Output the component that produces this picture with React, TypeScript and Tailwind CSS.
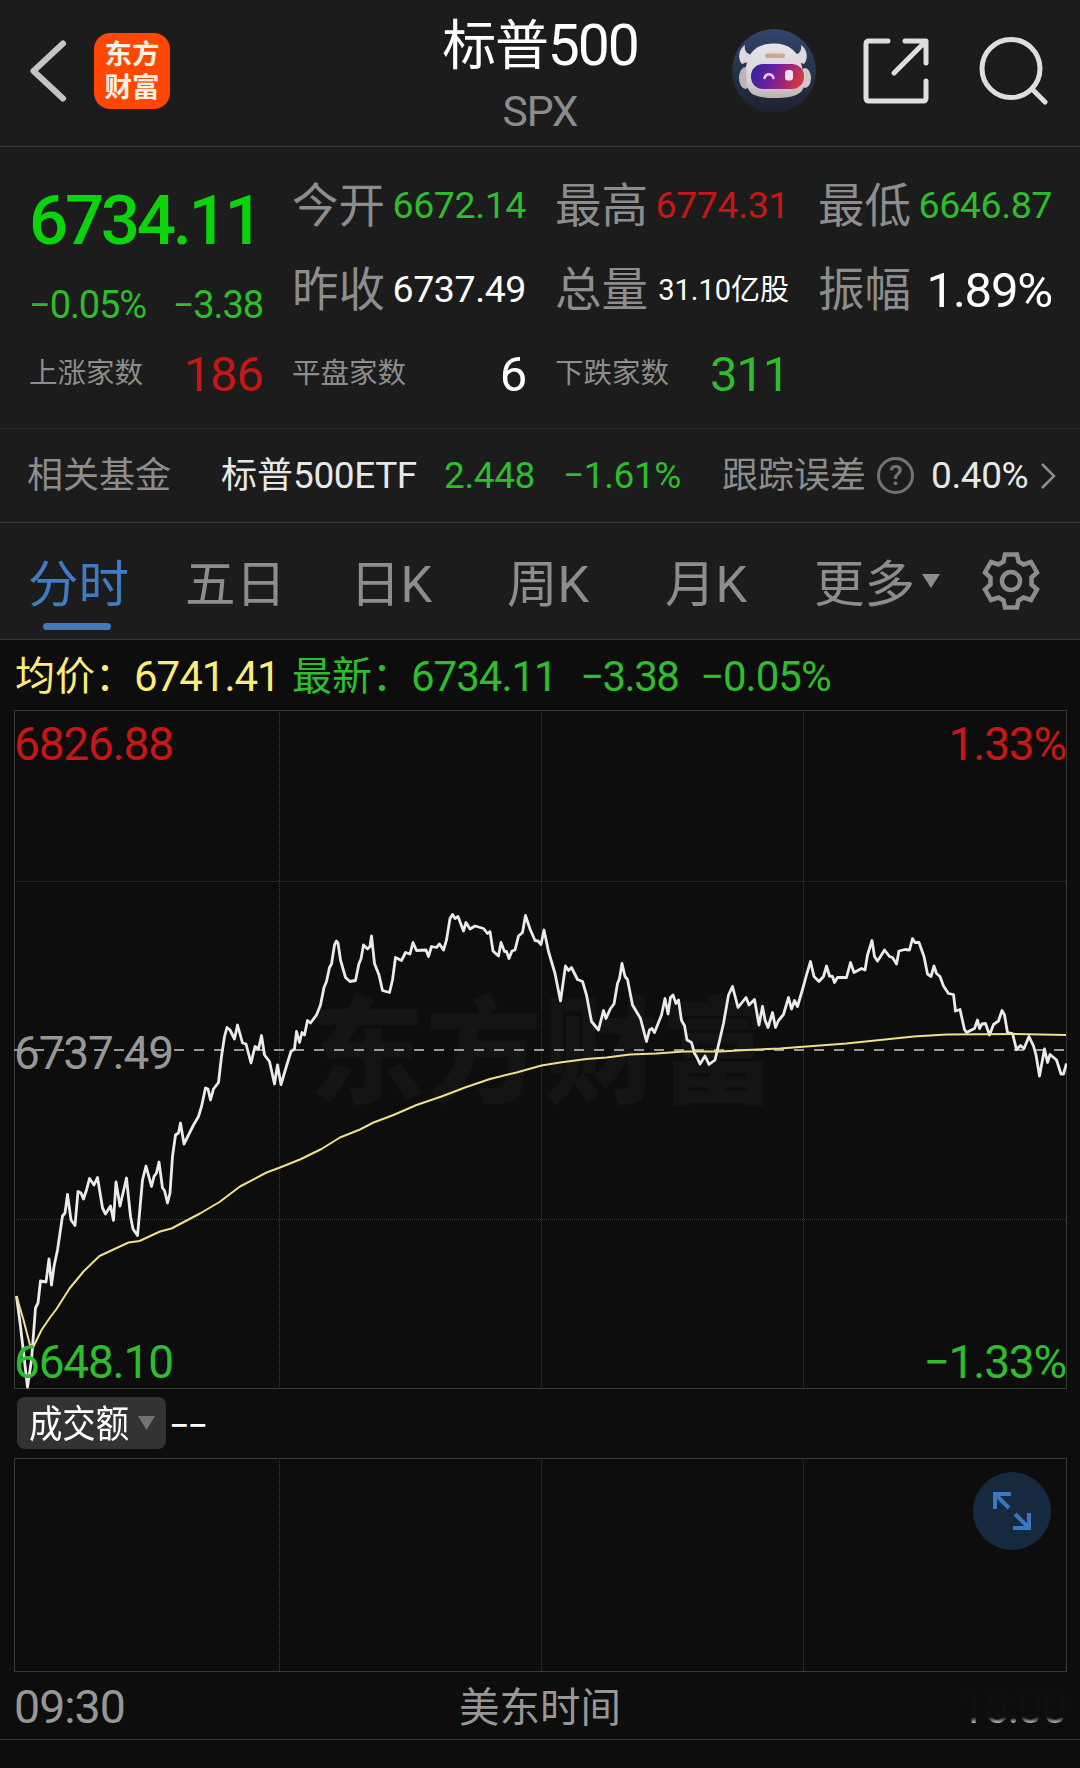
import React, { useState } from "react";

const GREEN = "text-[#2dbd2d]";
const RED = "text-[#c81616]";

const TABS = [
  { label: "分时", width: "w-[157px]" },
  { label: "五日", width: "w-[165px]" },
  { label: "日K", width: "w-[157px]" },
  { label: "周K", width: "w-[158px]" },
  { label: "月K", width: "w-[149px]" },
];

const QUOTES = [
  { label: "今开", value: "6672.14", style: "text-[37.5px] tracking-[-0.4px] text-[#2dbd2d]" },
  { label: "最高", value: "6774.31", style: "text-[37.5px] tracking-[-0.4px] text-[#c81616]" },
  { label: "最低", value: "6646.87", style: "text-[37.5px] tracking-[-0.4px] text-[#2dbd2d]" },
  { label: "昨收", value: "6737.49", style: "text-[37.5px] tracking-[-0.4px] text-white" },
  { label: "总量", value: "31.10亿股", style: "text-[29px] text-white" },
  { label: "振幅", value: "1.89%", style: "text-[49px] tracking-[-1.200px] text-white" },
];

const BREADTH = [
  { label: "上涨家数", value: "186", color: RED },
  { label: "平盘家数", value: "6", color: "text-white" },
  { label: "下跌家数", value: "311", color: GREEN },
];

const PRICE_LINE =
  "16.5,1296 20.5,1326.5 27.5,1387 31.5,1360 35.5,1308 38,1303 40.5,1281 46,1282 49,1259 51.5,1285 54,1266.5 57.5,1250 60,1233 62.5,1216 65,1213 67.5,1194.5 71,1220 75,1225.5 78,1191.5 81,1193 83.5,1199 86.5,1190 89.5,1178.5 94,1185 97.5,1177.5 102.5,1208 105.5,1214 110.5,1206 113.5,1220.5 116,1182 120,1206 126.5,1178 130.5,1216.5 133,1229 137.5,1235.5 142.5,1180 146,1166 151.5,1186.5 154,1176.5 156.5,1173 159,1162 162.5,1188 164.5,1190.5 167.5,1203 170,1193 172.5,1156.5 175.5,1135 178.5,1133 180.5,1123 184,1144 193.5,1125 198.5,1116.5 201.5,1106.5 205.5,1088 208,1089 210.5,1100 213.5,1089 218.5,1082.5 221.5,1056.5 224.5,1036.5 227,1027.5 230,1030 234.5,1039 237.5,1025 242.5,1043 246,1044 251,1063 255,1046.5 258.5,1049 261.5,1035.5 264.5,1055 269.5,1061.5 274.5,1084 277.5,1065 281,1084.5 286.5,1066 291,1051.5 294.5,1049 296.5,1031.5 299.5,1042.5 302,1032.5 304.5,1035 307.5,1020.5 310.5,1023 316.5,1015 320.5,1005 324,987.5 326.5,981.5 329.5,967.5 331.5,964 334.5,945 336.5,941 338,943 340.5,960 345.5,977.5 350,981.5 355.5,980.5 359,963.5 361,959 363.5,945 367.5,949 370,946.5 371.5,936 374.5,963.5 379,975 382.5,990.5 389.5,992.5 392.5,980 395.5,957.5 401.5,960.5 405.5,952.5 410,954 413,942.5 416.5,950.5 426,950 428.5,956.5 431.5,946.5 436.5,947.5 439.5,944 443.5,950 446.5,940 450,918.5 452.5,914.5 455,918.5 458,916.5 463.5,931 466,922.5 470,929 475,926 483.5,928.5 487.5,933.5 490,931.5 493,951 498.5,956 501,942.5 504.5,951.5 506.5,951.5 509,958.5 512,951 515,950 518.5,936 522.5,932.5 525.5,915.5 530,929 535,940.5 538,941 541,944.5 544,930 548.5,951.5 555,973.5 560.5,1001 563.5,980 565.5,966 568.5,970.5 571.5,967.5 577.5,979.5 582.5,981.5 586.5,995 591.5,1021.5 598.5,1030 603.5,1010.5 606,1018.5 610.5,1008.5 614,1004 617.5,983.5 619.5,978.5 622,963.5 625,976.5 627.5,979.5 632.5,1005 640.5,1018.5 646.5,1041.5 649.5,1030 652,1028.5 654.5,1032.5 661.5,1015 665,998.5 668,1014 670.5,997.5 673,995 676,1003.5 678.5,1000 681.5,1020.5 684.5,1025.5 687,1040 691.5,1042.5 694.5,1053.5 696.5,1056.5 700,1064 705,1056 709,1064.5 715,1060 718.5,1045 723.5,1023.5 728.5,995 732.5,986.5 738,1007.5 746,997.5 749,1005 754.5,999.5 759,1025 762.5,1006.5 765,1020 768,1027.5 772.5,1012.5 775.5,1027.5 778.5,1020.5 783.5,1014.5 788.5,997.5 791.5,1009 794.5,1000.5 797.5,1006.5 803.5,986 806.5,975 810.5,961.5 814,976.5 819,981.5 823.5,976.5 826.5,966 829.5,976 832.5,976.5 834.5,982.5 837.5,977.5 846.5,977.5 850.5,962.5 854,972.5 861.5,968.5 865,970 867.5,955 872,940.5 874.5,956.5 877.5,961 880.5,956.5 884.5,950 889.5,956.5 892.5,957.5 896.5,964 899,951 905,949.5 909.5,950 912.5,938.5 915,942.5 919,942.5 924,956.5 927.5,974 931,976.5 934,966 936.5,973.5 940,976.5 943.5,986 948.5,993.5 953.5,994.5 955.5,1011 960,1009.5 964.5,1029.5 966.5,1032.5 974.5,1028.5 977.5,1020 979.5,1028.5 982,1024 985.5,1023.5 989.5,1035 993.5,1024.5 998.5,1021 1002,1010.5 1004.5,1015 1007.5,1032.5 1012.5,1033.5 1016.5,1049.5 1020.5,1045.5 1024,1048.5 1029,1036.5 1033.5,1046 1036,1055 1039.5,1076 1044.5,1049 1047.5,1062.5 1050,1054.5 1056.5,1060 1061,1074 1063.5,1074 1066.5,1063.5";

const AVG_LINE =
  "16.5,1296 23.5,1320 30,1345 33.5,1346.5 41.5,1330 50,1317.5 56.5,1309 69.5,1288.5 83.5,1271.5 99.5,1256 128.5,1242.5 139.5,1241 160,1231.5 171.5,1228.5 200,1213.5 219.5,1202 240,1186.5 266.5,1172.5 280,1167.5 300,1159.5 321.5,1149 340,1137.5 360,1129.5 373.5,1122.5 393.5,1115 416.5,1105 441.5,1096.5 465,1087.5 490,1079 516.5,1072.5 541.5,1065.5 560,1062.5 586.5,1059 606.5,1057.5 630,1054.5 656.5,1053.5 683.5,1051.5 720,1051.5 746.5,1050 780,1048.5 806.5,1046.5 846.5,1043.5 880,1040 913.5,1036.5 946.5,1034.5 1013.5,1034 1066,1035";

const RobotAvatar = () => (
  <svg className="h-[84px] w-[84px]" viewBox="0 0 84 84">
    <defs>
      <linearGradient id="sky" x1="0" y1="0" x2="0" y2="1">
        <stop offset="0" stopColor="#33456b" />
        <stop offset="0.6" stopColor="#252f45" />
        <stop offset="1" stopColor="#1d222d" />
      </linearGradient>
      <linearGradient id="visor" x1="0" y1="0" x2="1" y2="0.2">
        <stop offset="0" stopColor="#2a2596" />
        <stop offset="0.45" stopColor="#6a1fa0" />
        <stop offset="0.8" stopColor="#a92a6c" />
        <stop offset="1" stopColor="#d0384a" />
      </linearGradient>
      <linearGradient id="helmet" x1="0" y1="0" x2="0" y2="1">
        <stop offset="0" stopColor="#e6e4e8" />
        <stop offset="0.7" stopColor="#d6d1d4" />
        <stop offset="1" stopColor="#b9b0b4" />
      </linearGradient>
    </defs>
    <circle cx="42" cy="42" r="42" fill="url(#sky)" />
    {/* horns */}
    <path d="M13 16C7 20 5 29 10 35L18 32L20 26C15 25 12 22 13 16Z" fill="#dcdade" />
    <path d="M69 16C75 20 77 29 72 35L64 32L62 26C67 25 70 22 69 16Z" fill="#dcdade" />
    {/* ears */}
    <ellipse cx="13.500" cy="49" rx="6.500" ry="11" fill="#bdb5b5" />
    <ellipse cx="73" cy="49" rx="6" ry="10" fill="#cfc9cc" />
    <path d="M14 38C16 22 26 15 41 14.500C56 14 67 22 70 38L72 55C72 65 62 69 43 69C23 69 16 65 15 55Z" fill="url(#helmet)" />
    <rect x="33" y="24.500" width="20" height="4.500" rx="2" fill="#c9a995" />
    <rect x="19" y="35" width="53" height="25" rx="12" fill="url(#visor)" />
    <path d="M32.500 49C34 44 40 44 41.500 49" fill="none" stroke="#e4cdf5" strokeWidth="2.500" strokeLinecap="round" />
    <rect x="53" y="41" width="8" height="10.500" rx="3" fill="#f3e3f0" />
  </svg>
);

const Header = () => (
  <header className="grid h-[147px] grid-cols-[1fr_200px_1fr] border-b border-[#363636]">
    <div className="flex items-center gap-6 pb-1 pl-[28px]">
      <svg className="h-[64px] w-[42px]" viewBox="0 0 42 64" fill="none" stroke="#c4c4c4" strokeWidth="6" strokeLinecap="round" strokeLinejoin="round">
        <path d="M35 4.500L5.500 32L35 59.500" />
      </svg>
      <div className="flex h-[76px] w-[76px] flex-col items-center justify-center rounded-[16px] bg-[#fd4704] text-[27.5px] leading-[33px] font-bold text-[#fff3e6]">
        <span>东方</span>
        <span>财富</span>
      </div>
    </div>
    <div className="flex flex-col items-center whitespace-nowrap">
      <h1 className="mt-[8px] text-[54px] leading-[76px] tracking-[-1.300px] text-white">
        标普<span className="text-[57px] tracking-[-2px]">500</span>
      </h1>
      <p className="text-[42.5px] leading-[54px] tracking-[-1px] text-[#8c8c8c]">SPX</p>
    </div>
    <div className="flex items-center justify-end pr-[32px] pb-1">
      <RobotAvatar />
      <svg className="ml-[46px] h-[68px] w-[68px]" viewBox="0 0 68 68" fill="none" stroke="#dedede" strokeWidth="5" strokeLinecap="round" strokeLinejoin="round">
        <path d="M26 4H7Q4 4 4 7V61Q4 64 7 64H61Q64 64 64 61V44" />
        <path d="M43 4H64V26M63 5L32 36" />
      </svg>
      <svg className="ml-[49px] h-[70px] w-[69px]" viewBox="0 0 69 70" fill="none" stroke="#dedede" strokeWidth="5" strokeLinecap="round">
        <circle cx="32" cy="32.500" r="29" />
        <path d="M53 53L66 66" />
      </svg>
    </div>
  </header>
);

const QuotePanel = () => (
  <section className="grid h-[282px] auto-rows-[84px] grid-cols-[repeat(4,234px)] gap-x-[29px] border-b border-[#262626] pt-[17px] pl-[29px]">
    <div className="row-span-2 flex flex-col whitespace-nowrap">
      <div className="flex h-[114px] items-center pb-[2px] text-[69px] leading-none font-medium tracking-[-3.300px] text-[#0cd40c]">6734.11</div>
      <div className={`flex h-[54px] items-center justify-between text-[38px] leading-none tracking-[-1.100px] ${GREEN}`}>
        <span>−0.05%</span>
        <span>−3.38</span>
      </div>
    </div>
    {QUOTES.map((q) => (
      <div key={q.label} className="flex items-center justify-between leading-none whitespace-nowrap">
        <span className="text-[46.5px] text-[#8d8d8d]">{q.label}</span>
        <span className={q.style}>{q.value}</span>
      </div>
    ))}
    {BREADTH.map((b) => (
      <div key={b.label} className="flex items-center justify-between leading-none whitespace-nowrap">
        <span className="text-[28.5px] text-[#8d8d8d]">{b.label}</span>
        <span className={`text-[49px] tracking-[-1.200px] ${b.color}`}>{b.value}</span>
      </div>
    ))}
  </section>
);

const FundRow = () => (
  <section className="flex h-[94px] items-center border-b border-[#363636] pl-[27px] text-[37px] leading-none tracking-[-0.4px] whitespace-nowrap">
    <span className="w-[194px] pt-px text-[36px] tracking-normal text-[#8d8d8d]">相关基金</span>
    <span className="w-[223px] text-[#e8e8e8]">
      <span className="text-[36px] tracking-normal">标普</span>500ETF
    </span>
    <span className={`w-[119px] ${GREEN}`}>2.448</span>
    <span className={`w-[159px] ${GREEN}`}>−1.61%</span>
    <span className="w-[155px] pt-px text-[36px] tracking-normal text-[#8d8d8d]">跟踪误差</span>
    <span className="flex h-[37px] w-[37px] items-center justify-center rounded-full border-[3px] border-[#737373] text-[28px] font-medium text-[#737373]">?</span>
    <span className="ml-[17px] w-[109px] text-[#e8e8e8]">0.40%</span>
    <svg className="h-[28px] w-[16px]" viewBox="0 0 16 28" fill="none" stroke="#8d8d8d" strokeWidth="2.500">
      <path d="M2 2L14 14L2 26" />
    </svg>
  </section>
);

const Tabs = () => {
  const [active, setActive] = useState("分时");
  return (
    <nav className="flex h-[117px] items-center border-b border-[#363636] pl-[28px] text-[50.5px] leading-none whitespace-nowrap text-[#8d8d8d]">
      {TABS.map((tab) => (
        <div key={tab.label} className={tab.width}>
          <button
            onClick={() => setActive(tab.label)}
            className={`relative pt-[8px] leading-[60px] ${active === tab.label ? "text-[#3f7cc4]" : ""}`}
          >
            {tab.label}
            {active === tab.label && (
              <span className="absolute -bottom-[15px] left-[49px] h-[7px] w-[68px] -translate-x-1/2 rounded-full bg-[#4079bd]" />
            )}
          </button>
        </div>
      ))}
      <button className="flex items-center gap-[7px]">
        <span className="pt-[8px]">更多</span>
        <svg className="h-[14px] w-[18px]" viewBox="0 0 18 14" fill="#8d8d8d">
          <path d="M0 0H18L9 14Z" />
        </svg>
      </button>
      <svg className="ml-[41px] h-[60px] w-[60px]" viewBox="-30 -30 60 60" fill="none" stroke="#8d8d8d" strokeWidth="4.500">
        <path d="M-6-26.500H6L7.500-19.500L12.500-16.500L20-19L26-8.500L20.500-3.500V3.500L26 8.500L20 19L12.500 16.500L7.500 19.500L6 26.500H-6L-7.500 19.500L-12.500 16.500L-20 19L-26 8.500L-20.500 3.500V-3.500L-26-8.500L-20-19L-12.500-16.500L-7.500-19.500Z" />
        <circle r="9" />
      </svg>
    </nav>
  );
};

const Legend = () => (
  <div className={`flex h-[70px] items-center pt-[3px] pl-[15px] text-[42px] leading-none tracking-[-1px] whitespace-nowrap ${GREEN}`}>
    <span className="w-[119px] text-[40px] tracking-normal text-[#fcec7c]">均价：</span>
    <span className="w-[158px] text-[#fcec7c]">6741.41</span>
    <span className="w-[119px] text-[40px] tracking-normal">最新：</span>
    <span className="w-[169px]">6734.11</span>
    <span className="w-[120px] tracking-[-1.500px]">−3.38</span>
    <span>−0.05%</span>
  </div>
);

const PriceChart = () => (
  <div className="relative mx-[14px] h-[679px] text-[46px] leading-none tracking-[-1.200px]">
    <span className="absolute top-[286px] left-[295px] text-[116px] font-black tracking-[1px] whitespace-nowrap text-[#141414]">东方财富</span>
    <svg className="absolute top-0 left-0 h-[679px] w-[1053px]" viewBox="14 710 1053 679" fill="none">
      <g stroke="#3a3a3a" strokeDasharray="1 1">
        <path d="M14 881.500H1067M14 1219.500H1067" />
        <path d="M279.500 710V1389M541.500 710V1389M803.500 710V1389" />
      </g>
      <rect x="14.500" y="710.500" width="1052" height="678" stroke="#3a3a3a" />
      <path d="M14 1050H1067" stroke="#9a9a9a" strokeWidth="2" strokeDasharray="10 10" />
      <polyline points={PRICE_LINE} stroke="#ebebeb" strokeWidth="2.800" strokeLinejoin="round" />
      <polyline points={AVG_LINE} stroke="#eee08c" strokeWidth="2" strokeLinejoin="round" />
    </svg>
    <span className={`absolute top-[11px] left-0 ${RED}`}>6826.88</span>
    <span className={`absolute top-[11px] right-0 ${RED}`}>1.33%</span>
    <span className="absolute top-[320px] left-0 text-[#979797]">6737.49</span>
    <span className={`absolute top-[629px] left-0 ${GREEN}`}>6648.10</span>
    <span className={`absolute top-[629px] right-0 ${GREEN}`}>−1.33%</span>
  </div>
);

const VolumeChart = () => (
  <>
    <div className="flex h-[69px] items-center pb-px pl-[17px] leading-none text-white">
      <button className="flex h-[52px] w-[149px] items-center rounded-[8px] bg-[#333333] pl-[12px] text-[37.5px] whitespace-nowrap">
        <span className="w-[109px] origin-left scale-x-[0.89] pt-[3px] text-left">成交额</span>
        <svg className="h-[14px] w-[17px]" viewBox="0 0 17 14" fill="#737373">
          <path d="M0 0H17L8.500 14Z" />
        </svg>
      </button>
      <span className="ml-[3px] pt-[6px] text-[36px] tracking-[-2px]">−−</span>
    </div>
    <div className="relative mx-[14px] h-[214px]">
      <svg className="h-[214px] w-[1053px]" viewBox="14 0 1053 214" fill="none">
        <path d="M279.500 0V214M541.500 0V214M803.500 0V214" stroke="#3a3a3a" strokeDasharray="1 1" />
        <rect x="14.500" y="0.500" width="1052" height="213" stroke="#3a3a3a" />
      </svg>
      <button className="absolute top-[14px] right-[15px] h-[78px] w-[78px] rounded-full bg-[#17293f]">
        <svg className="h-[78px] w-[78px]" viewBox="0 0 78 78" fill="none" stroke="#3b78c2" strokeWidth="4">
          <path d="M38 22H22V37M23 23L36 36" />
          <path d="M40 56H56V41M55 55L42 42" />
        </svg>
      </button>
    </div>
    <div className="flex h-[68px] items-center justify-between border-b border-[#363636] px-[14px] pt-[4px] text-[46.5px] leading-none tracking-[-1px] text-[#979797]">
      <span className="w-[150px]">09:30</span>
      <span className="pt-[2px] text-[40.5px] tracking-normal">美东时间</span>
      {/* closing time fades in towards the baseline */}
      <span className="w-[150px] bg-linear-to-b from-[#0f0f0f] from-70% to-[#c0c0c0] to-83% bg-clip-text text-right tracking-[-1.800px] text-transparent">16:00</span>
    </div>
  </>
);

const App = () => {
  return (
    <div className="h-[1768px] w-[1080px] overflow-hidden bg-[#0d0d0d] font-[Roboto,'Noto_Sans_CJK_SC',sans-serif]">
      <div className="bg-[#1c1c1c]">
        <Header />
        <QuotePanel />
        <FundRow />
        <Tabs />
      </div>
      <Legend />
      <PriceChart />
      <VolumeChart />
    </div>
  );
};

export default App;
